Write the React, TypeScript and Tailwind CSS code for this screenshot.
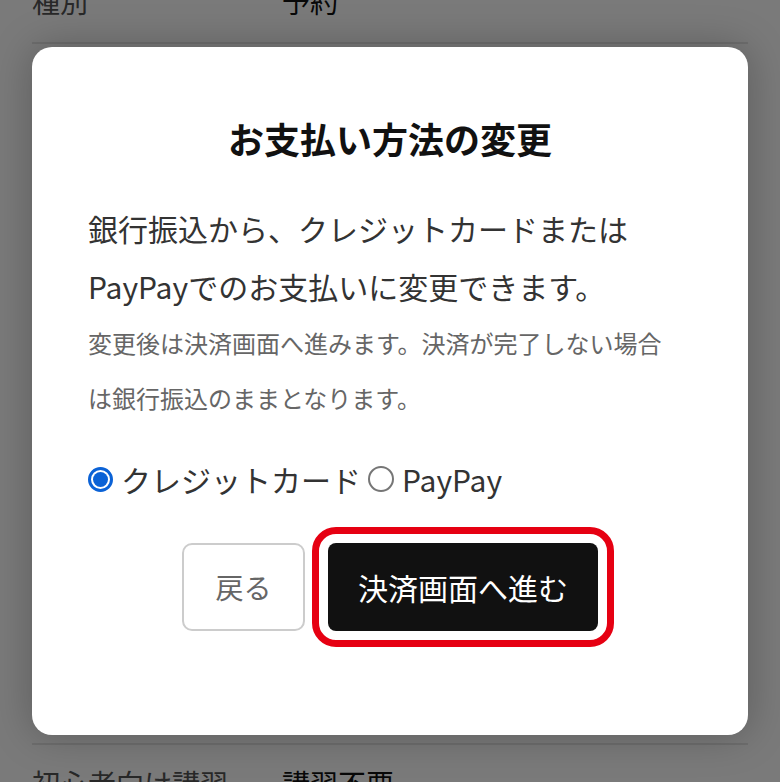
import React, { useState } from 'react';

const FONT = { fontFamily: '"Noto Sans CJK JP", "Noto Sans", sans-serif' };

function Radio({ checked }: { checked: boolean }) {
  return checked ? (
    <span className="flex h-[25px] w-[25px] shrink-0 items-center justify-center rounded-full border-[3px] border-[#0b62d6] bg-white">
      <span className="h-[15px] w-[15px] rounded-full bg-[#0b62d6]" />
    </span>
  ) : (
    <span className="h-[26px] w-[26px] shrink-0 rounded-full border-2 border-[#767676] bg-white" />
  );
}

export default function App() {
  const [method, setMethod] = useState<'card' | 'paypay'>('card');

  return (
    <div className="relative h-[782px] w-full overflow-hidden bg-white" style={FONT}>
      {/* 背景ページ */}
      <div className="px-8">
        <div className="-mt-[40px] grid h-[84px] grid-cols-[250px_1fr] items-center border-b-2 border-[#e5e5e5] text-[28px]">
          <span className="text-[#555]">種別</span>
          <span className="text-[#111]">予約</span>
        </div>
        <div className="h-[701px] border-b-2 border-[#e5e5e5]" />
        <div className="grid h-[76px] grid-cols-[250px_1fr] items-center text-[28px]">
          <span className="text-[#555]">初心者向け講習</span>
          <span className="text-[#111]">講習不要</span>
        </div>
      </div>

      {/* オーバーレイ */}
      <div className="absolute inset-0 flex items-center justify-center bg-black/[0.52]">
        <div className="flex h-[688px] w-[716px] flex-col rounded-[20px] bg-white px-[56px] pt-[64px] shadow-[0_0_40px_rgba(0,0,0,0.25)]">
          <h2 className="text-center text-[36px] font-bold leading-[54px] text-[#111]">
            お支払い方法の変更
          </h2>
          <p className="mt-[34px] text-[30px] leading-[58px] text-[#333]">
            銀行振込から、クレジットカードまたは
            <br />
            PayPayでのお支払いに変更できます。
          </p>
          <p className="text-[24px] leading-[55px] text-[#666]">
            変更後は決済画面へ進みます。決済が完了しない場合
            <br />
            は銀行振込のままとなります。
          </p>

          <div className="mt-[34px] flex h-[40px] items-center text-[30px] text-[#333]">
            <label className="flex cursor-pointer items-center gap-[8px]" onClick={() => setMethod('card')}>
              <Radio checked={method === 'card'} />
              <span>クレジットカード</span>
            </label>
            <label className="ml-[7px] flex cursor-pointer items-center gap-[8px]" onClick={() => setMethod('paypay')}>
              <Radio checked={method === 'paypay'} />
              <span>PayPay</span>
            </label>
          </div>

          <div className="mt-[44px] flex justify-center gap-[23px]">
            <button className="h-[88px] w-[123px] rounded-[10px] border-2 border-[#cccccc] bg-white text-[28px] text-[#666]">
              戻る
            </button>
            <button className="h-[88px] w-[270px] rounded-[8px] bg-[#111] text-[30px] font-normal text-white outline-[7px] outline-offset-[9px] outline-[#e60012] outline-solid">
              決済画面へ進む
            </button>
          </div>
        </div>
      </div>
    </div>
  );
}
